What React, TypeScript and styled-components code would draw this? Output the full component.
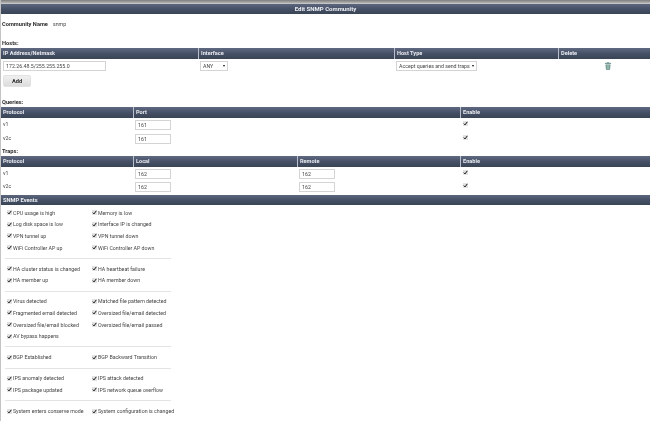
import React from "react";
import styled, { createGlobalStyle } from "styled-components";

const Global = createGlobalStyle`
  html, body { margin: 0; padding: 0; background: #fff; }
  body { font-family: Roboto, "Liberation Sans", sans-serif; font-size: 5.25px; color: #444; }
`;

const Page = styled.div`
  width: 650px;
  height: 421px;
  overflow: hidden;
  box-sizing: border-box;
  border-left: 1px solid #c4c4c4;
  background: #fff;
  display: flex;
  flex-direction: column;
  filter: blur(0.3px);
`;

const TopStrip = styled.div`
  height: 4px;
  flex: none;
  background: linear-gradient(#7d7d7d, #a0a0a0 50%, #d0d0d0);
`;

const Bar = styled.div`
  height: 10px;
  flex: none;
  background: linear-gradient(#5c677e, #465167 50%, #394455);
  color: #eef0f4;
  font-weight: 700;
  font-size: 5.7px;
  line-height: 10px;
`;

const Title = styled(Bar)`
  text-align: center;
  font-size: 6px;
`;

const EventsBar = styled(Bar)`
  margin-top: 2px;
  padding-left: 2px;
`;

const Community = styled.div`
  margin: 5px 0 0 1px;
  height: 10px;
  line-height: 10px;
  display: flex;
  gap: 5px;
`;

const Strong = styled.span`
  font-weight: 700;
  font-size: 5.7px;
  color: #2c2c2c;
`;

const Label = styled.div<{ $top: number }>`
  margin-top: ${(p) => p.$top}px;
  height: 10px;
  line-height: 10px;
  padding-left: 1px;
  font-weight: 700;
  font-size: 5.7px;
  color: #2c2c2c;
`;

const Grid = styled.div<{ $cols: string }>`
  display: grid;
  grid-template-columns: ${(p) => p.$cols};
`;

const Head = styled.div`
  height: 11px;
  line-height: 11px;
  padding-left: 2px;
  box-sizing: border-box;
  border-left: 1px solid #b9c0cc;
  background: linear-gradient(#5f6a82, #465167 50%, #394455);
  color: #e9ebf0;
  font-weight: 700;
  font-size: 5.6px;
  &:first-child { border-left: 0; }
`;

const Cell = styled.div<{ $h: number; $pad?: number; $up?: number }>`
  height: ${(p) => p.$h}px;
  display: flex;
  align-items: center;
  padding-left: ${(p) => p.$pad ?? 2}px;
  padding-bottom: ${(p) => p.$up ?? 0}px;
  box-sizing: border-box;
`;

const TextInput = styled.div<{ $w: number }>`
  width: ${(p) => p.$w}px;
  height: 10px;
  box-sizing: border-box;
  border: 1px solid #d4d4d4;
  padding-left: 2px;
  line-height: 8px;
  background: #fff;
  white-space: nowrap;
`;

const Select = styled(TextInput)`
  display: flex;
  align-items: center;
  justify-content: space-between;
  padding-right: 2px;
`;

const Caret = styled.span`
  width: 0;
  height: 0;
  border-left: 1.5px solid transparent;
  border-right: 1.5px solid transparent;
  border-top: 2.5px solid #111;
`;

const AddButton = styled.div`
  width: 28px;
  height: 12px;
  margin: 2px 0 0 2px;
  border-radius: 2px;
  background: linear-gradient(#f0f0f0, #dcdcdc);
  border: 1px solid #e2e2e2;
  box-sizing: border-box;
  text-align: center;
  line-height: 10px;
  font-weight: 700;
  font-size: 5.7px;
  color: #2c2c2c;
`;

const Check = styled.span`
  display: inline-flex;
  flex: none;
  width: 5px;
  height: 5px;
  background: #e2e2e2;
  align-items: center;
  justify-content: center;
  svg { display: block; }
`;

const CheckBox = () => (
  <Check>
    <svg width="5" height="5" viewBox="0 0 5 5">
      <path d="M0.8 2.6 L2 3.9 L4.3 0.9" stroke="#111" strokeWidth="1" fill="none" />
    </svg>
  </Check>
);

const EventGroup = styled.div`
  width: 166px;
  box-sizing: border-box;
  margin-left: 4px;
  padding: 4px 0 4.5px 2px;
  display: grid;
  grid-template-columns: 85px 1fr;
  grid-auto-rows: 11.6px;
  border-bottom: 1px solid #e4e4e4;
  &:first-child { padding-top: 2px; }
  &:last-child { border-bottom: 0; }
`;

const Event = styled.div`
  display: flex;
  align-items: center;
  gap: 1px;
  white-space: nowrap;
`;

const Footer = styled.div`
  margin-top: auto;
  margin-bottom: 2px;
  height: 1px;
  flex: none;
  background: #777;
`;

const groups = [
  ["CPU usage is high", "Memory is low", "Log disk space is low", "Interface IP is changed", "VPN tunnel up", "VPN tunnel down", "WiFi Controller AP up", "WiFi Controller AP down"],
  ["HA cluster status is changed", "HA heartbeat failure", "HA member up", "HA member down"],
  ["Virus detected", "Matched file pattern detected", "Fragmented email detected", "Oversized file/email detected", "Oversized file/email blocked", "Oversized file/email passed", "AV bypass happens"],
  ["BGP Established", "BGP Backward Transition"],
  ["IPS anomaly detected", "IPS attack detected", "IPS package updated", "IPS network queue overflow"],
  ["System enters conserve mode", "System configuration is changed"],
];

const Trash = () => (
  <svg width="6" height="8" viewBox="0 0 6 8">
    <rect x="0" y="0.8" width="6" height="1.2" fill="#7d9c98" />
    <rect x="2" y="0" width="2" height="1" fill="#8daca8" />
    <path d="M0.5 2.4 H5.5 L5 7.8 H1 Z" fill="#5f8a84" />
    <path d="M2 3 V7 M3 3 V7 M4 3 V7" stroke="#d4e6e2" strokeWidth="0.5" />
  </svg>
);

const qCols = "132px 327px 1fr";
const tCols = "132px 164px 163px 1fr";
const hCols = "197px 196px 164px 1fr";

export default function App() {
  return (
    <Page>
      <Global />
      <TopStrip />
      <Title>Edit SNMP Community</Title>
      <Community>
        <Strong>Community Name</Strong>
        <span>snmp</span>
      </Community>
      <Label $top={9}>Hosts:</Label>
      <Grid $cols={hCols}>
        <Head>IP Address/Netmask</Head>
        <Head>Interface</Head>
        <Head>Host Type</Head>
        <Head>Delete</Head>
        <Cell $h={14}><TextInput $w={103}>172.26.48.5/255.255.255.0</TextInput></Cell>
        <Cell $h={14}><Select $w={28}>ANY<Caret /></Select></Cell>
        <Cell $h={14}><Select $w={81}>Accept queries and send traps<Caret /></Select></Cell>
        <Cell $h={14} $pad={47} $up={1}><Trash /></Cell>
      </Grid>
      <AddButton>Add</AddButton>
      <Label $top={10}>Queries:</Label>
      <Grid $cols={qCols}>
        <Head>Protocol</Head>
        <Head>Port</Head>
        <Head>Enable</Head>
        <Cell $h={14} $up={3}>v1</Cell>
        <Cell $h={14}><TextInput $w={36}>161</TextInput></Cell>
        <Cell $h={14} $pad={3} $up={3}><CheckBox /></Cell>
        <Cell $h={14} $up={3}>v2c</Cell>
        <Cell $h={14}><TextInput $w={36}>161</TextInput></Cell>
        <Cell $h={14} $pad={3} $up={3}><CheckBox /></Cell>
      </Grid>
      <Label $top={0}>Traps:</Label>
      <Grid $cols={tCols}>
        <Head>Protocol</Head>
        <Head>Local</Head>
        <Head>Remote</Head>
        <Head>Enable</Head>
        <Cell $h={14} $up={3}>v1</Cell>
        <Cell $h={14}><TextInput $w={36}>162</TextInput></Cell>
        <Cell $h={14}><TextInput $w={36}>162</TextInput></Cell>
        <Cell $h={14} $pad={3} $up={3}><CheckBox /></Cell>
        <Cell $h={12} $up={3}>v2c</Cell>
        <Cell $h={12}><TextInput $w={36}>162</TextInput></Cell>
        <Cell $h={12}><TextInput $w={36}>162</TextInput></Cell>
        <Cell $h={12} $pad={3} $up={3}><CheckBox /></Cell>
      </Grid>
      <EventsBar>SNMP Events</EventsBar>
      <div>
        {groups.map((g, i) => (
          <EventGroup key={i}>
            {g.map((t) => (
              <Event key={t}>
                <CheckBox />
                {t}
              </Event>
            ))}
          </EventGroup>
        ))}
      </div>
      <Footer />
    </Page>
  );
}
